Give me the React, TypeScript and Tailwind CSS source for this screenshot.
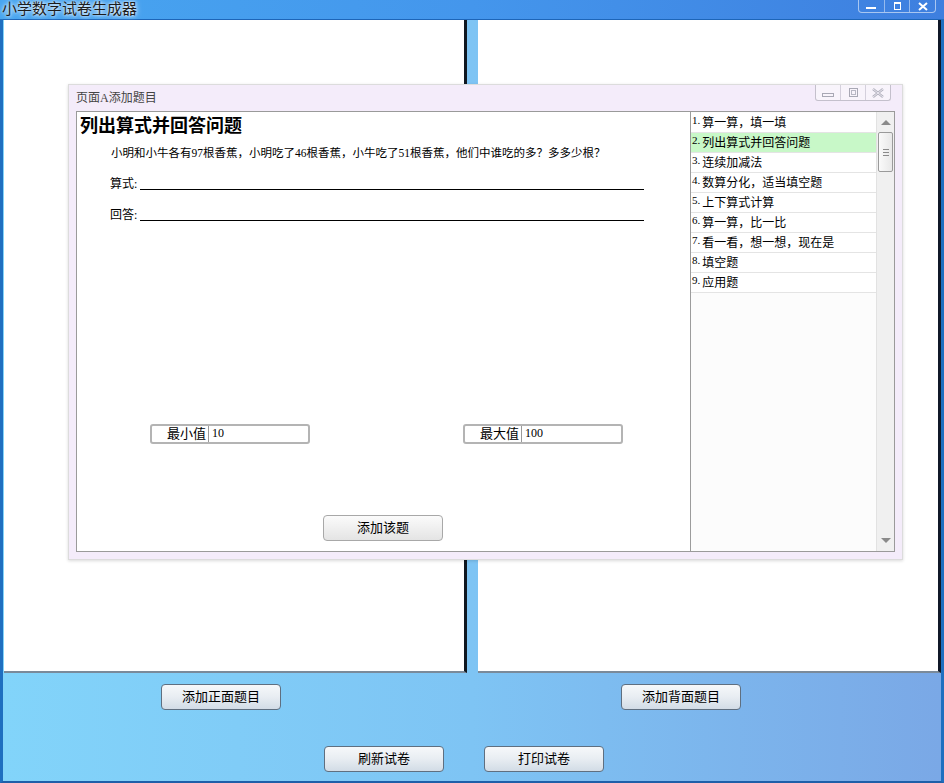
import React from "react";

const FONT = "font-['Liberation_Serif','Noto_Sans_CJK_SC',serif]";

const TOPICS = [
  "算一算，填一填",
  "列出算式并回答问题",
  "连续加减法",
  "数算分化，适当填空题",
  "上下算式计算",
  "算一算，比一比",
  "看一看，想一想，现在是",
  "填空题",
  "应用题",
];

function SysButtons() {
  return (
    <div className="absolute right-[8px] top-0 flex h-[13px] w-[78px] rounded-b-[4px] border border-t-0 border-[rgba(255,255,255,0.55)]">
      <div className="flex flex-1 items-center justify-center border-r border-[rgba(255,255,255,0.45)]">
        <div className="mt-[4px] h-[2px] w-[10px] bg-white" />
      </div>
      <div className="flex flex-1 items-center justify-center border-r border-[rgba(255,255,255,0.45)]">
        <div className="h-[8px] w-[7px] border border-white border-t-2" />
      </div>
      <div className="flex flex-1 items-center justify-center">
        <svg width="10" height="9" viewBox="0 0 10 9">
          <path d="M1 1 L9 8 M9 1 L1 8" stroke="white" strokeWidth="2" />
        </svg>
      </div>
    </div>
  );
}

function DialogButtons() {
  return (
    <div className="absolute right-[11px] top-0 flex h-[16px] w-[76px] rounded-b-[3px] border border-t-0 border-[#c4c0cc] bg-[#f8f4fb]">
      <div className="flex flex-1 items-center justify-center border-r border-[#d4d0dc]">
        <div className="mt-[5px] h-[4px] w-[12px] border border-[#a8a8b4]" />
      </div>
      <div className="flex flex-1 items-center justify-center border-r border-[#d4d0dc]">
        <div className="h-[9px] w-[9px] border border-[#a8a8b4] p-[1px]">
          <div className="h-full w-full border border-[#b8b8c4]" />
        </div>
      </div>
      <div className="flex flex-1 items-center justify-center">
        <svg width="12" height="10" viewBox="0 0 12 10">
          <path d="M1 1 L11 9 M11 1 L1 9" stroke="#b0b0bc" strokeWidth="2.4" />
          <path d="M1 1 L11 9 M11 1 L1 9" stroke="#f8f4fb" strokeWidth="0.8" />
        </svg>
      </div>
    </div>
  );
}

function WinButton({ label, className = "" }: { label: string; className?: string }) {
  return (
    <button
      className={`flex h-[26px] w-[120px] items-center justify-center rounded-[4px] border border-[#5f6f80] bg-gradient-to-b from-[#f6f8fa] via-[#e8edf2] to-[#d2dce6] text-[13px] text-black ${FONT} ${className}`}
    >
      {label}
    </button>
  );
}

function RangeField({ label, value }: { label: string; value: string }) {
  return (
    <div className="flex h-[20px] w-[160px] rounded-[3px] border-2 border-[#b4b4b4] bg-white">
      <div className="flex w-[56px] items-center justify-end pr-[2px] text-[13px] text-black">{label}</div>
      <div className="w-px bg-[#9a9a9a]" />
      <div className="flex items-start pl-[3px] text-[12px] leading-[14px] text-black">{value}</div>
    </div>
  );
}

function AnswerLine({ label }: { label: string }) {
  return (
    <div className="flex items-end pl-[33px]">
      <span className="text-[12px] leading-[14px] text-black">{label}:</span>
      <div className="mb-[1px] ml-[3px] h-px w-[504px] bg-black" />
    </div>
  );
}

function TopicList() {
  return (
    <div className="flex w-[204px] border-l border-[#9c9c9c] bg-[#fcfcfc]">
      <div className="flex-1 pt-[1px]">
        {TOPICS.map((t, i) => (
          <div
            key={t}
            className={`flex h-[20px] items-center overflow-hidden whitespace-nowrap border-b border-[#e4e4e4] pl-[1px] text-[12px] text-black ${i === 1 ? "bg-[#c8f8c8]" : "bg-white"}`}
          >
            <span className="mr-[2px] -translate-y-[2px] text-[11px]">{i + 1}.</span>
            {t}
          </div>
        ))}
      </div>
      {/* vertical scrollbar */}
      <div className="flex w-[18px] flex-col items-center border-l border-[#e2e2e2] bg-[#f0f0f0]">
        <div className="flex h-[20px] items-center">
          <svg width="10" height="6" viewBox="0 0 10 6">
            <path d="M0 6 L5 1 L10 6 Z" fill="#8a8a8a" />
          </svg>
        </div>
        <div className="flex h-[40px] w-[15px] flex-col items-center justify-center gap-[2px] rounded-[2px] border border-[#9a9a9a] bg-gradient-to-r from-[#fafafa] to-[#e8e8e8]">
          <div className="h-px w-[6px] bg-[#8a8a8a]" />
          <div className="h-px w-[6px] bg-[#8a8a8a]" />
          <div className="h-px w-[6px] bg-[#8a8a8a]" />
        </div>
        <div className="flex-1" />
        <div className="flex h-[20px] items-center">
          <svg width="10" height="6" viewBox="0 0 10 6">
            <path d="M0 0 L5 5 L10 0 Z" fill="#8a8a8a" />
          </svg>
        </div>
      </div>
    </div>
  );
}

function AddQuestionDialog() {
  return (
    <div className="absolute left-[68px] top-[84px] w-[835px] border border-[#dcdcdc] bg-[#f4ecfa] shadow-[0_1px_3px_rgba(0,0,0,0.15)]">
      <div className="relative flex h-[26px] items-center pl-[7px] text-[12px] text-[#444]">
        页面A添加题目
        <DialogButtons />
      </div>
      <div className="mx-[7px] mb-[7px] flex h-[441px] border border-[#9a9a9a] bg-white">
        <div className="flex flex-1 flex-col">
          <div className="mt-[2px] pl-[3px] text-[18px] font-bold leading-[24px] text-black">列出算式并回答问题</div>
          <div className="mt-[7px] pl-[34px] text-[11.5px] leading-[16px] text-black">
            小明和小牛各有97根香蕉，小明吃了46根香蕉，小牛吃了51根香蕉，他们中谁吃的多？多多少根？
          </div>
          <div className="mt-[16px] flex flex-col gap-[17px]">
            <AnswerLine label="算式" />
            <AnswerLine label="回答" />
          </div>
          <div className="mt-[202px] flex">
            <div className="ml-[73px]">
              <RangeField label="最小值" value="10" />
            </div>
            <div className="ml-[153px]">
              <RangeField label="最大值" value="100" />
            </div>
          </div>
          <div className="mt-[71px] flex pl-[246px]">
            <button className="flex h-[26px] w-[120px] items-center justify-center rounded-[4px] border border-[#a8a8a8] bg-gradient-to-b from-[#fbfbfb] to-[#e4e4e4] text-[13px] text-black">
              添加该题
            </button>
          </div>
        </div>
        <TopicList />
      </div>
    </div>
  );
}

export default function App() {
  return (
    <div className={`relative h-[783px] w-[944px] overflow-hidden bg-[#3d86e4] ${FONT}`}>
      {/* title bar */}
      <div className="relative flex h-[19px] items-center bg-gradient-to-r from-[#48a6f0] via-[#4496ec] to-[#3e7fdf] pl-[2px]">
        <span className="text-[15px] leading-[17px] text-[#1c1c1c] [text-shadow:0_0_6px_#ffffff,0_0_3px_#ffffff]">
          小学数字试卷生成器
        </span>
        <SysButtons />
      </div>

      {/* client area */}
      <div className="flex h-[764px] flex-col border-x-[3px] border-b-2 border-x-[#1f6fc0] border-b-[#1f5fa8] bg-gradient-to-r from-[#82d4fa] via-[#7ec4f4] to-[#7aa8e6]">
        <div className="flex h-[654px] border-t border-[#1d65b8]">
          <div className="ml-[1px] w-[463px] border-r-[3px] border-b-2 border-r-[#101820] border-b-[#7a8a9a] bg-white" />
          <div className="ml-[11px] flex-1 border-r-[3px] border-b-2 border-r-[#101828] border-b-[#7a8a9a] bg-white" />
        </div>
        <div className="mt-[11px] flex">
          <WinButton label="添加正面题目" className="ml-[158px]" />
          <WinButton label="添加背面题目" className="ml-[340px]" />
        </div>
        <div className="mt-[36px] flex">
          <WinButton label="刷新试卷" className="ml-[321px]" />
          <WinButton label="打印试卷" className="ml-[40px]" />
        </div>
      </div>

      <AddQuestionDialog />
    </div>
  );
}
